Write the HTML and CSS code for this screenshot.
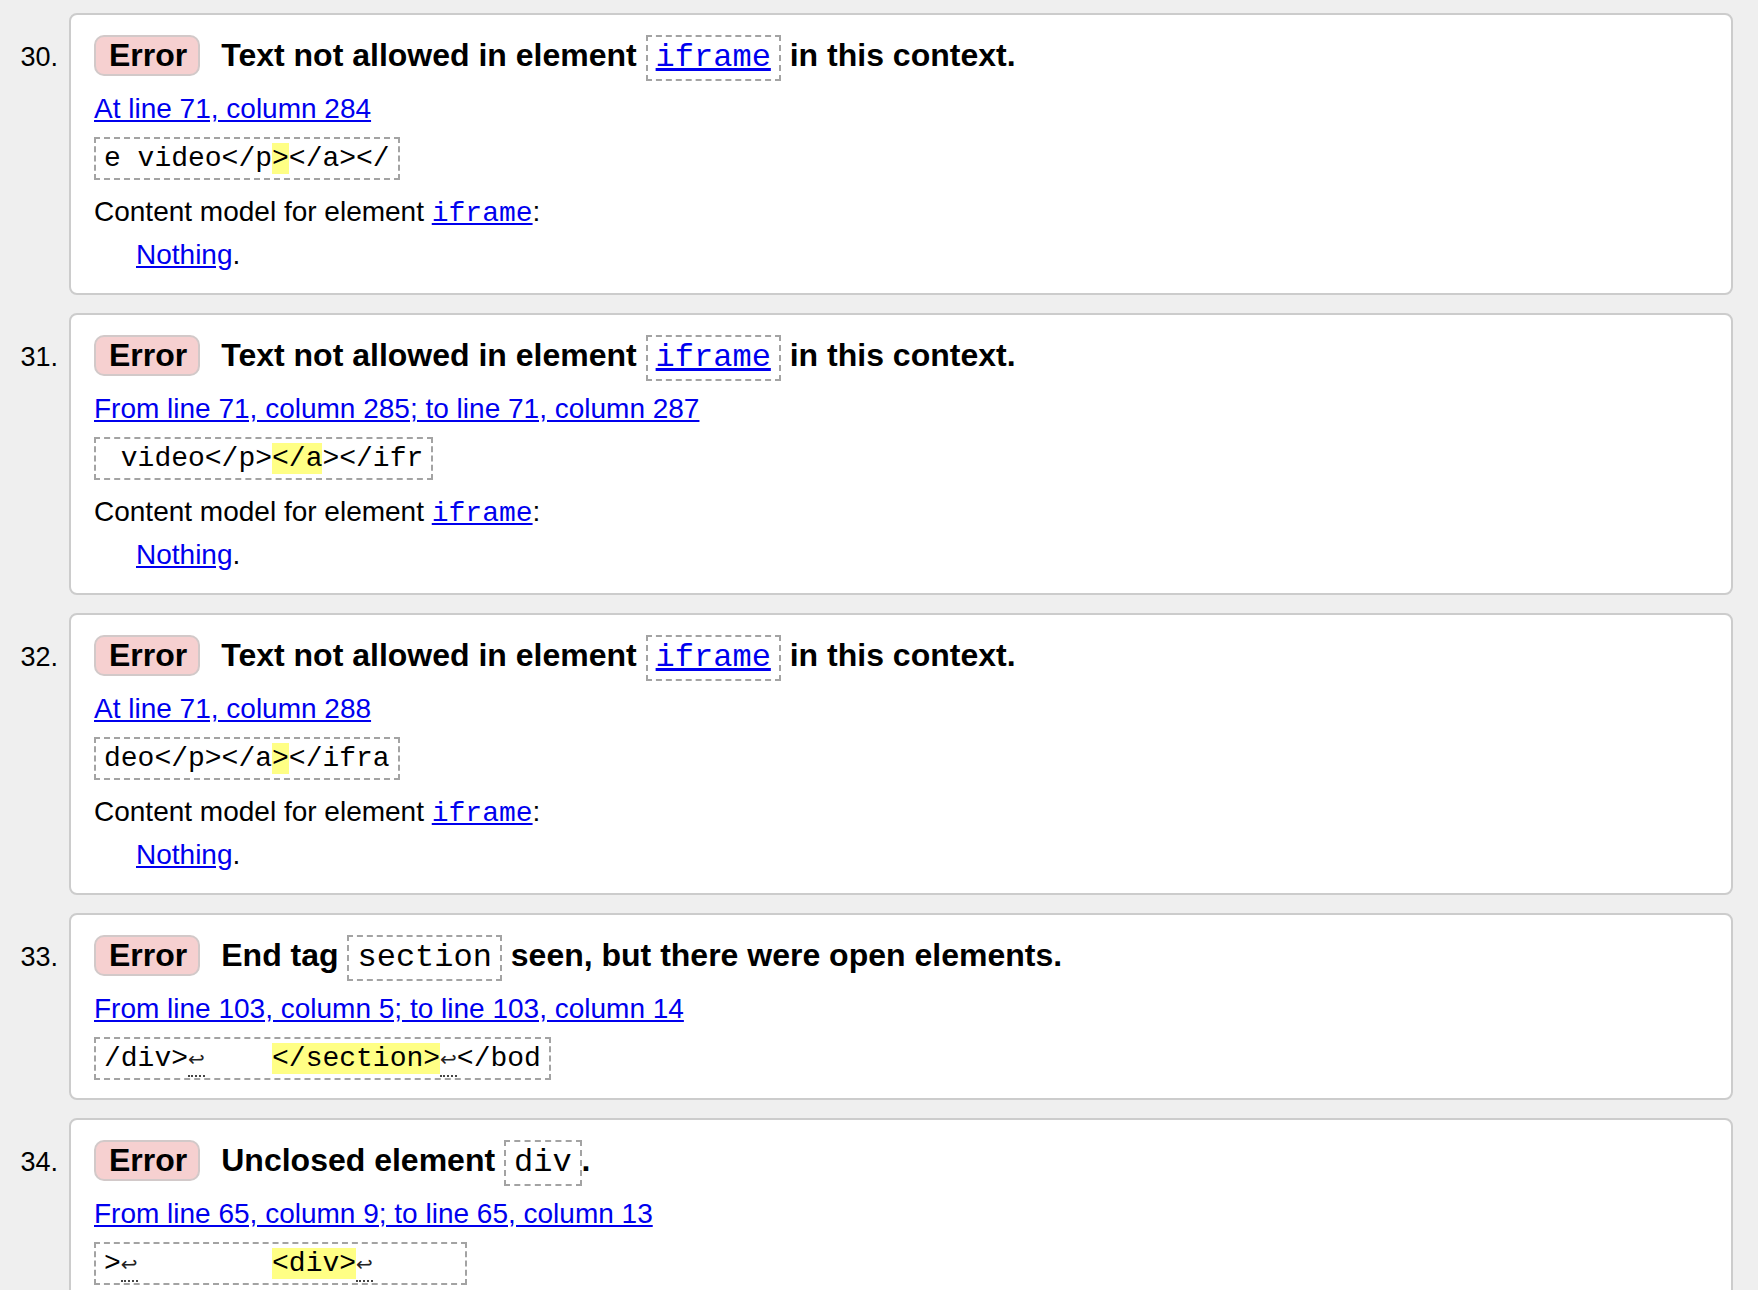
FILE: index.html
```html
<!DOCTYPE html>
<html lang="en">
<head>
<meta charset="utf-8">
<title>Validation results</title>
<link rel="stylesheet" href="styles.css">
</head>
<body>
<ol class="msgs">
  <li class="msg">
    <span class="num">30.</span>
    <div class="card">
      <p class="title"><strong class="badge">Error</strong><span>Text not allowed in element <code class="ref"><a href="#">iframe</a></code> in this context.</span></p>
      <p class="loc"><a href="#">At line 71, column 284</a></p>
      <pre class="extract">e video&lt;/p<b>&gt;</b>&lt;/a&gt;&lt;/</pre>
      <dl class="model"><dt>Content model for element <a class="mono" href="#">iframe</a>:</dt><dd><a href="#">Nothing</a>.</dd></dl>
    </div>
  </li>
  <li class="msg">
    <span class="num">31.</span>
    <div class="card">
      <p class="title"><strong class="badge">Error</strong><span>Text not allowed in element <code class="ref"><a href="#">iframe</a></code> in this context.</span></p>
      <p class="loc"><a href="#">From line 71, column 285; to line 71, column 287</a></p>
      <pre class="extract"> video&lt;/p&gt;<b>&lt;/a</b>&gt;&lt;/ifr</pre>
      <dl class="model"><dt>Content model for element <a class="mono" href="#">iframe</a>:</dt><dd><a href="#">Nothing</a>.</dd></dl>
    </div>
  </li>
  <li class="msg">
    <span class="num">32.</span>
    <div class="card">
      <p class="title"><strong class="badge">Error</strong><span>Text not allowed in element <code class="ref"><a href="#">iframe</a></code> in this context.</span></p>
      <p class="loc"><a href="#">At line 71, column 288</a></p>
      <pre class="extract">deo&lt;/p&gt;&lt;/a<b>&gt;</b>&lt;/ifra</pre>
      <dl class="model"><dt>Content model for element <a class="mono" href="#">iframe</a>:</dt><dd><a href="#">Nothing</a>.</dd></dl>
    </div>
  </li>
  <li class="msg">
    <span class="num">33.</span>
    <div class="card">
      <p class="title"><strong class="badge">Error</strong><span>End tag <code class="ref">section</code> seen, but there were open elements.</span></p>
      <p class="loc"><a href="#">From line 103, column 5; to line 103, column 14</a></p>
      <pre class="extract">/div&gt;<span class="lf">↩</span>    <b>&lt;/section&gt;</b><span class="lf">↩</span>&lt;/bod</pre>
    </div>
  </li>
  <li class="msg">
    <span class="num">34.</span>
    <div class="card">
      <p class="title"><strong class="badge">Error</strong><span>Unclosed element <code class="ref">div</code>.</span></p>
      <p class="loc"><a href="#">From line 65, column 9; to line 65, column 13</a></p>
      <pre class="extract">&gt;<span class="lf">↩</span>        <b>&lt;div&gt;</b><span class="lf">↩</span>     </pre>
    </div>
  </li>
</ol>
</body>
</html>
```

FILE: styles.css
```css
html, body {
  margin: 0;
  background: #efefef;
}

body {
  font-family: "Liberation Sans", Arial, Helvetica, sans-serif;
  color: #000;
}

a {
  color: #0000ee;
  text-decoration: underline;
}

.msgs {
  list-style: none;
  margin: 0;
  padding: 13px 25px 0 0;
  display: flex;
  flex-direction: column;
  gap: 18px;
}

.msg {
  display: flex;
  align-items: baseline;
}

.num {
  flex: none;
  width: 58px;
  margin-right: 11px;
  text-align: right;
  font-size: 27px;
}

.card {
  flex: 1;
  min-width: 0;
  background: #fff;
  border: 2px solid #cccccc;
  border-radius: 8px;
  padding: 17px 20px 18px 23px;
}

.title {
  margin: 0;
  font-size: 32px;
  font-weight: bold;
  line-height: 46px;
}

.badge {
  display: inline-block;
  background: #f6d0d0;
  border: 2px solid #d2c9c9;
  border-radius: 10px;
  padding: 0 11px 0 13px;
  line-height: 37px;
  margin-right: 21px;
}

.ref {
  display: inline-block;
  font-family: "Liberation Mono", "Courier New", monospace;
  font-weight: normal;
  font-size: 32px;
  line-height: 38px;
  padding: 2px 8px;
  border: 2px dashed #a3a3a3;
}

.loc {
  margin: 8px 0 0;
  font-size: 28px;
  line-height: 40px;
}

.extract {
  margin: 8px 0 0;
  width: fit-content;
  border: 2px dashed #a3a3a3;
  padding: 0 8px;
  font-family: "Liberation Mono", "Courier New", monospace;
  font-size: 28px;
  line-height: 39px;
  white-space: pre;
}

.extract b {
  font-weight: normal;
  background: #ffff85;
}

.lf {
  display: inline-block;
  width: 16.8px;
  text-align: center;
  color: #222;
  font-family: "DejaVu Sans", "DejaVu Sans Mono", sans-serif;
  font-size: 20px;
  line-height: 32px;
  border-bottom: 2px dotted #444;
}

.model {
  margin: 11px 0 0;
  font-size: 28px;
  line-height: 41px;
}

.model dt {
  margin: 0;
}

.model dd {
  margin: 0 0 0 42px;
}

.mono {
  font-family: "Liberation Mono", "Courier New", monospace;
}
```
